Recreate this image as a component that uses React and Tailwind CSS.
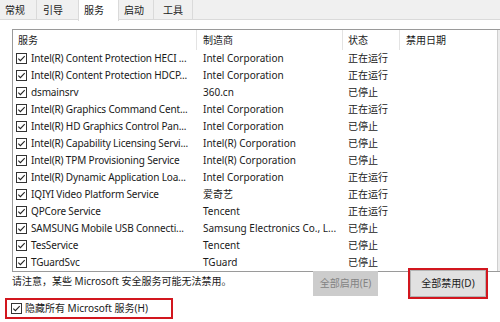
import React from 'react';

const services = [
  ['Intel(R) Content Protection HECI ...', 'Intel Corporation', '正在运行'],
  ['Intel(R) Content Protection HDCP...', 'Intel Corporation', '正在运行'],
  ['dsmainsrv', '360.cn', '已停止'],
  ['Intel(R) Graphics Command Cent...', 'Intel Corporation', '正在运行'],
  ['Intel(R) HD Graphics Control Pan...', 'Intel Corporation', '已停止'],
  ['Intel(R) Capability Licensing Servi...', 'Intel(R) Corporation', '已停止'],
  ['Intel(R) TPM Provisioning Service', 'Intel(R) Corporation', '已停止'],
  ['Intel(R) Dynamic Application Loa...', 'Intel Corporation', '正在运行'],
  ['IQIYI Video Platform Service', '爱奇艺', '正在运行'],
  ['QPCore Service', 'Tencent', '正在运行'],
  ['SAMSUNG Mobile USB Connecti...', 'Samsung Electronics Co., L...', '已停止'],
  ['TesService', 'Tencent', '已停止'],
  ['TGuardSvc', 'TGuard', '已停止'],
];

const Check = () => (
  <svg width="11" height="11" viewBox="0 0 11 11" className="shrink-0">
    <rect x="0.5" y="0.5" width="10" height="10" fill="#fff" stroke="#333" />
    <path d="M2.3 5.6 L4.4 7.7 L8.7 3.2" fill="none" stroke="#222" strokeWidth="1.1" />
  </svg>
);

const App = () => {
  return (
    <div
      className="w-[500px] h-[322px] bg-white overflow-hidden text-[10px] text-[#1a1a1a]"
      style={{ fontFamily: '"Noto Sans", "Noto Sans CJK SC", sans-serif' }}
    >
      {/* tabs */}
      <div className="flex h-[20px] bg-[#f0f0f0] border-b border-[#dadada]">
        <div className="w-[37px] pl-[5px] leading-[20px] border-r border-[#dadada]">常规</div>
        <div className="w-[41px] pl-[6px] leading-[20px]">引导</div>
        <div className="w-[41px] pl-[5px] leading-[20px] bg-white border-x border-[#dadada] h-[21px]">服务</div>
        <div className="w-[35px] pl-[5px] leading-[20px] border-r border-[#dadada]">启动</div>
        <div className="w-[39px] pl-[9px] leading-[20px] border-r border-[#dadada]">工具</div>
      </div>

      {/* list */}
      <div className="pt-[9px] pl-[12px]">
        <div className="flex border-l border-y border-[#9a9a9a]">
          <div className="flex-1">
            <div className="flex h-[20px] leading-[20px]">
              <div className="w-[183px] pl-[5px]">服务</div>
              <div className="w-[146px] pl-[6px] border-l border-[#e3e3e3]">制造商</div>
              <div className="w-[57px] pl-[5px] border-l border-[#e3e3e3]">状态</div>
              <div className="w-[98px] pl-[6px] border-l border-[#e3e3e3]">禁用日期</div>
            </div>
            {services.map((s, i) => (
              <div key={i} className="flex h-[17px] leading-[17px] whitespace-nowrap">
                <div className="w-[183px] pl-[3px] flex items-center gap-[4px] overflow-hidden">
                  <Check />
                  <span className="tracking-[-0.15px]">{s[0]}</span>
                </div>
                <div className="w-[146px] pl-[7px] overflow-hidden">{s[1]}</div>
                <div className="w-[57px] pl-[6px]">{s[2]}</div>
                <div className="w-[98px]"></div>
              </div>
            ))}
          </div>
          <div className="w-[3px] bg-[#ececec] border-l border-[#cfcfcf]"></div>
        </div>
      </div>

      {/* bottom buttons */}
      <div className="flex items-start h-[26px]">
        <div className="w-[313px] pl-[12px] pt-[2px] leading-[14px] whitespace-nowrap">
          请注意，某些 Microsoft 安全服务可能无法禁用。
        </div>
        <div className="w-[65px] h-[25px] -mt-[1px] bg-[#cccccc] text-[#838383] flex items-center justify-center">
          全部启用(E)
        </div>
        <div className="ml-[30px] -mt-[4px] w-[80px] h-[31px] border-2 border-[#d2161e] bg-white">
          <div className="h-full bg-[#e1e1e1] border border-[#b4b4b4] flex items-center justify-center">
            全部禁用(D)
          </div>
        </div>
      </div>

      <div className="ml-[5px] w-[168px] h-[21px] border-2 border-[#d2161e] flex items-center pl-[4px] gap-[3px] whitespace-nowrap">
        <Check />
        <span>隐藏所有 Microsoft 服务(H)</span>
      </div>
    </div>
  );
};

export default App;
